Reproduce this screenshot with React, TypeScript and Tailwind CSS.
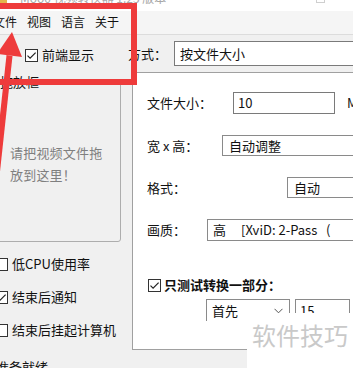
import React from "react";

function Box({ checked }: { checked?: boolean }) {
  return (
    <span className="w-[13px] h-[13px] border border-[#333333] bg-white flex items-center justify-center shrink-0">
      {checked && (
        <svg width="11" height="11" viewBox="0 0 11 11">
          <path d="M1.5 5.6 L4.1 8.2 L9.6 2.6" stroke="#222" strokeWidth="1.2" fill="none" />
        </svg>
      )}
    </span>
  );
}

export default function App() {
  return (
    <div className="relative w-[353px] h-[368px] overflow-hidden bg-[#f0f0f0] font-['Noto_Sans_CJK_SC',sans-serif] text-[13px] leading-[16px] text-[#111111]">
      {/* title bar */}
      <div className="h-[11px] bg-white flex items-start overflow-hidden">
        <span className="w-[7px] h-[5px] bg-[#e3b54c] shrink-0" />
        <span className="ml-[13px] -mt-[9px] text-[12px] leading-[14px] text-[#a8a8a8] whitespace-nowrap">Moo0 视频转换器 1.25 版本</span>
        <span className="ml-auto mr-[28px] -mt-[6px] w-[9px] h-[9px] border border-[#cfcfcf]" />
      </div>
      {/* menu bar */}
      <div className="h-[24px] bg-[#f5f5f5] border-b border-[#dcdcdc] flex items-center text-[12px] leading-[14px] pb-[1px]">
        <span className="-ml-[7px] shrink-0">文件</span>
        <span className="ml-[10px] shrink-0">视图</span>
        <span className="ml-[10px] shrink-0">语言</span>
        <span className="ml-[10px] shrink-0">关于</span>
      </div>
      {/* top row */}
      <div className="h-[37px] flex items-center">
        <div className="w-[128px] shrink-0 flex items-center pl-[25px] pt-[3px]">
          <Box checked />
          <span className="ml-[4px] whitespace-nowrap">前端显示</span>
        </div>
        <div className="flex items-center shrink-0">
          <span className="w-[46px] shrink-0 whitespace-nowrap">方式：</span>
          <div className="h-[25px] w-[200px] shrink-0 border border-[#7a7a7a] bg-white flex items-center pl-[5px] whitespace-nowrap">按文件大小</div>
        </div>
      </div>
      {/* main row */}
      <div className="flex">
        <div className="w-[132px] shrink-0 flex flex-col">
          <fieldset className="-ml-[10px] mt-[3px] w-[131px] h-[167px] border border-[#adadad] rounded-[3px] pl-[19px] pt-[53px]">
            <legend className="-ml-[13px] px-[3px] whitespace-nowrap leading-[14px]">拖放框</legend>
            <p className="text-[#7f7f7f] leading-[22px] tracking-[0.2px]">
              请把视频文件拖
              <br />
              放到这里！
            </p>
          </fieldset>
          <div className="flex flex-col -ml-[5px] mt-[14px] gap-[17px]">
            <div className="flex items-center">
              <Box />
              <span className="ml-[4px] whitespace-nowrap">低CPU使用率</span>
            </div>
            <div className="flex items-center">
              <Box checked />
              <span className="ml-[4px] whitespace-nowrap">结束后通知</span>
            </div>
            <div className="flex items-center">
              <Box />
              <span className="ml-[4px] whitespace-nowrap">结束后挂起计算机</span>
            </div>
          </div>
          <div className="-ml-[4px] mt-[21px] whitespace-nowrap">准备就绪</div>
        </div>
        <div className="w-[240px] h-[278px] shrink-0 border border-[#a0a0a0] bg-white flex flex-col">
          <div className="flex items-center mt-[19px] pl-[14px]">
            <span className="w-[86px] shrink-0 whitespace-nowrap">文件大小：</span>
            <div className="w-[102px] h-[22px] shrink-0 border border-[#7a7a7a] flex items-center pl-[4px]">10</div>
            <span className="ml-[12px] shrink-0 whitespace-nowrap">MB</span>
          </div>
          <div className="flex items-center mt-[21px] pl-[14px]">
            <span className="w-[75px] shrink-0 whitespace-nowrap">宽 x 高：</span>
            <div className="w-[200px] h-[21px] shrink-0 border border-[#8a8a8a] flex items-center pl-[6px] whitespace-nowrap">自动调整</div>
          </div>
          <div className="flex items-center mt-[21px] pl-[14px]">
            <span className="w-[140px] shrink-0 whitespace-nowrap">格式：</span>
            <div className="w-[200px] h-[21px] shrink-0 border border-[#8a8a8a] flex items-center pl-[6px] whitespace-nowrap">自动</div>
          </div>
          <div className="flex items-center mt-[21px] pl-[14px]">
            <span className="w-[60px] shrink-0 whitespace-nowrap">画质：</span>
            <div className="w-[200px] h-[22px] shrink-0 border border-[#8a8a8a] flex items-center pl-[5px] whitespace-nowrap">
              <span className="w-[28px] shrink-0">高</span>
              <span className="shrink-0">[XviD: 2-Pass&nbsp;&nbsp;&nbsp;(</span>
            </div>
          </div>
          <div className="flex items-center mt-[36px] pl-[15px]">
            <Box checked />
            <span className="ml-[3px] font-bold whitespace-nowrap">只测试转换一部分：</span>
          </div>
          <div className="flex items-start mt-[6px] pl-[73px]">
            <div className="w-[84px] h-[24px] shrink-0 border border-[#8a8a8a] flex items-center pl-[5px] pr-[6px] justify-between">
              <span>首先</span>
              <svg width="9" height="6" viewBox="0 0 9 6">
                <path d="M0.5 0.8 L4.5 4.8 L8.5 0.8" stroke="#555" strokeWidth="1" fill="none" />
              </svg>
            </div>
            <div className="ml-[5px] w-[55px] h-[24px] shrink-0 border border-[#8a8a8a] flex items-center pl-[4px]">15</div>
          </div>
        </div>
      </div>

      {/* watermark */}
      <div className="absolute left-[200px] top-[321px] w-[47px] h-[26px] bg-white" />
      <div className="absolute right-0 bottom-0 w-[106px] h-[55px] bg-white flex items-start justify-center pt-[8px]">
        <span className="text-[24px] leading-[28px] text-[#c9c9c9] whitespace-nowrap">软件技巧</span>
      </div>

      {/* red annotation box */}
      <div className="absolute left-[-10px] top-[3px] w-[147px] h-[82px] border-[6px] border-[#ee3b3b]" />

      {/* red arrow */}
      <svg className="absolute left-0 top-0" width="353" height="368" viewBox="0 0 353 368">
        <polygon points="12,32 22,57 -3,54" fill="#ee3b3b" />
        <polygon points="6.5,55 12.5,56 -2,190 -8,189" fill="#ee3b3b" />
      </svg>
    </div>
  );
}
